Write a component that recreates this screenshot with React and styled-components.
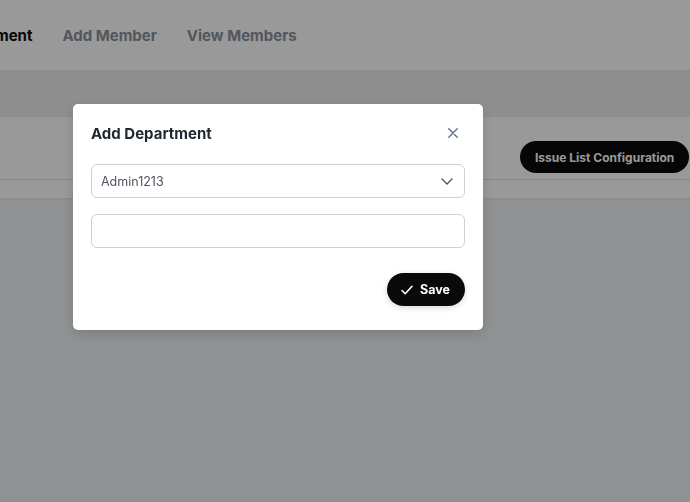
import React from "react";
import styled, { createGlobalStyle } from "styled-components";

const Global = createGlobalStyle`
  html, body { margin: 0; padding: 0; }
  body {
    font-family: Inter, "Noto Sans", "Liberation Sans", sans-serif;
    background: #eef2f5;
    width: 690px;
    height: 502px;
    overflow: hidden;
  }
  * { box-sizing: border-box; }
`;

const Page = styled.div`
  width: 690px;
  height: 502px;
  display: flex;
  flex-direction: column;
  background: #eef2f5;
  overflow: hidden;
`;

const Header = styled.header`
  height: 70px;
  background: #ffffff;
  display: flex;
  align-items: center;
  overflow: hidden;
`;

const Nav = styled.nav`
  display: flex;
  align-items: center;
  gap: 30px;
  margin-left: -55px;
`;

const Tab = styled.span`
  font-size: 15px;
  font-weight: 700;
  white-space: nowrap;
  color: ${(p) => (p.$active ? "#0b0b0b" : "#8a909c")};
`;

const SubBar = styled.div`
  height: 47px;
  background: #ededed;
`;

const ToolRow = styled.div`
  height: 63px;
  background: #ffffff;
  border-bottom: 1px solid #e6e6e6;
  display: flex;
  align-items: flex-end;
  justify-content: flex-end;
  padding: 0 1px 6px 0;
`;

const PillButton = styled.button`
  height: 32px;
  border: none;
  border-radius: 16px;
  background: #0a0a0a;
  color: #ffffff;
  font-family: Inter, "Liberation Sans", sans-serif;
  font-size: 12px;
  font-weight: 700;
  padding: 0 15px;
  white-space: nowrap;
  width: 169px;
  text-align: left;
`;

const Strip = styled.div`
  height: 18px;
  background: #ffffff;
  box-shadow: 0 1px 2px rgba(0, 0, 0, 0.06);
`;

const Overlay = styled.div`
  position: fixed;
  inset: 0;
  background: rgba(0, 0, 0, 0.4);
  display: flex;
  align-items: flex-start;
  padding: 104px 0 0 73px;
`;

const Modal = styled.div`
  width: 410px;
  background: #ffffff;
  border-radius: 5px;
  box-shadow: 0 4px 12px rgba(0, 0, 0, 0.15);
  padding: 17px 18px 24px 18px;
  display: flex;
  flex-direction: column;
`;

const TitleRow = styled.div`
  height: 24px;
  display: flex;
  align-items: center;
  justify-content: space-between;
  margin-bottom: 19px;
`;

const Title = styled.h2`
  margin: 0;
  font-size: 15px;
  font-weight: 700;
  color: #1f2731;
`;

const CloseBtn = styled.button`
  border: none;
  background: none;
  padding: 0;
  margin-right: 6px;
  width: 12px;
  height: 12px;
  display: flex;
  align-items: center;
  justify-content: center;
  color: #5b6b80;
`;

const Field = styled.div`
  height: 34px;
  border: 1px solid #cdd2da;
  border-radius: 6px;
  display: flex;
  align-items: center;
  justify-content: space-between;
  padding: 0 10px 0 9px;
  margin-bottom: ${(p) => p.$mb || 0}px;
  font-size: 12.5px;
  color: #4f5560;
`;

const Footer = styled.div`
  display: flex;
  justify-content: flex-end;
  margin-top: 25px;
`;

const SaveButton = styled.button`
  height: 33px;
  border: none;
  border-radius: 17px;
  background: #0a0a0a;
  color: #ffffff;
  display: flex;
  align-items: center;
  gap: 7px;
  padding: 0 15px 0 14px;
  font-family: Inter, "Liberation Sans", sans-serif;
  font-size: 12.5px;
  font-weight: 700;
  box-shadow: 0 2px 6px rgba(0, 0, 0, 0.15);
`;

export default function App() {
  return (
    <>
      <Global />
      <Page>
        <Header>
          <Nav>
            <Tab $active>Department</Tab>
            <Tab>Add Member</Tab>
            <Tab>View Members</Tab>
          </Nav>
        </Header>
        <SubBar />
        <ToolRow>
          <PillButton>Issue List Configuration</PillButton>
        </ToolRow>
        <Strip />
      </Page>
      <Overlay>
        <Modal>
          <TitleRow>
            <Title>Add Department</Title>
            <CloseBtn aria-label="close">
              <svg width="10" height="10" viewBox="0 0 10 10" fill="none" stroke="currentColor" strokeWidth="1.3" strokeLinecap="round">
                <path d="M0.8 0.8L9.2 9.2M9.2 0.8L0.8 9.2" />
              </svg>
            </CloseBtn>
          </TitleRow>
          <Field $mb={16}>
            <span>Admin1213</span>
            <svg width="14" height="14" viewBox="0 0 14 14" fill="none" stroke="#4b5563" strokeWidth="1.4" strokeLinecap="round" strokeLinejoin="round">
              <path d="M2 5L7 10L12 5" />
            </svg>
          </Field>
          <Field />
          <Footer>
            <SaveButton>
              <svg width="12" height="10" viewBox="0 0 12 10" fill="none" stroke="#ffffff" strokeWidth="1.6" strokeLinecap="round" strokeLinejoin="round">
                <path d="M1 5.5L4.2 8.7L11 1.3" />
              </svg>
              Save
            </SaveButton>
          </Footer>
        </Modal>
      </Overlay>
    </>
  );
}
